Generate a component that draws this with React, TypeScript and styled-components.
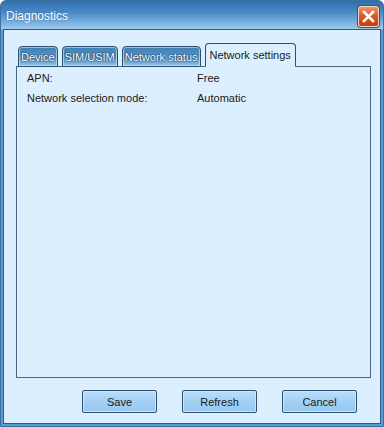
import { Fragment } from "react";
import styled, { createGlobalStyle } from "styled-components";

const GlobalStyle = createGlobalStyle`
  html, body {
    margin: 0;
    padding: 0;
    background: #ffffff;
  }
  body {
    font-family: "Liberation Sans", Arial, sans-serif;
    font-size: 11px;
  }
`;

const Window = styled.div`
  width: 384px;
  height: 427px;
  box-sizing: border-box;
  display: flex;
  flex-direction: column;
  border-radius: 6px 6px 0 0;
  background: linear-gradient(to bottom, #2f6fae 0px, #4b8cc8 12px, #9ccaee 28px, #5a9ad6 29px, #5a9ad6 100%);
  border: 1px solid #3a6f9f;
  overflow: hidden;
`;

const TitleBar = styled.div`
  height: 28px;
  flex: none;
  display: flex;
  align-items: center;
  justify-content: space-between;
  padding: 0 4px 0 5px;
  box-sizing: border-box;
`;

const Title = styled.span`
  color: #ffffff;
  font-size: 12px;
  text-shadow: 0 0 2px rgba(20, 60, 110, 0.5);
  margin-top: 1px;
`;

const CloseButton = styled.div`
  width: 21px;
  height: 21px;
  box-sizing: border-box;
  margin-top: 2px;
  border: 1px solid #f3d7c8;
  border-radius: 3px;
  background: linear-gradient(to bottom, #ef9a6a 0%, #dc5a2c 45%, #c23a14 100%);
  box-shadow: 0 0 0 1px #8a3a1e;
  display: flex;
  align-items: center;
  justify-content: center;
`;

const Body = styled.div`
  flex: 1;
  margin: 0 2px 2px 2px;
  background: #dcefff;
  border: 1px solid #2c5b88;
  display: flex;
  flex-direction: column;
  padding: 13px 9px 10px 12px;
`;

const TabStrip = styled.div`
  display: flex;
  align-items: flex-end;
  gap: 4px;
  padding-left: 2px;
  position: relative;
  z-index: 1;
  margin-bottom: -1px;
`;

const Tab = styled.div<{ $active?: boolean }>`
  box-sizing: border-box;
  height: ${(p) => (p.$active ? "24px" : "21px")};
  padding: 0 ${(p) => (p.$active ? "4px" : "2px")};
  display: flex;
  align-items: center;
  border: 1px solid #2e4f70;
  border-bottom: ${(p) => (p.$active ? "1px solid #dcefff" : "1px solid #2e4f70")};
  border-radius: 4px 4px 0 0;
  font-size: 11px;
  color: ${(p) => (p.$active ? "#1a1a1a" : "#ffffff")};
  background: ${(p) =>
    p.$active
      ? "#dcefff"
      : "linear-gradient(to bottom, #3f7fb2 0%, #5596c8 50%, #88bfe6 100%)"};
  box-shadow: ${(p) => (p.$active ? "none" : "inset 0 0 0 1px rgba(225, 242, 255, 0.55)")};
  text-shadow: ${(p) =>
    p.$active ? "none" : "0 0 2px #183a5c, 0 0 1px #183a5c, 0 0 1px #183a5c"};
`;

const Panel = styled.div`
  flex: 1;
  border: 1px solid #4a6782;
  background: #dcefff;
  padding: 1px 10px;
  display: grid;
  grid-template-columns: 170px 1fr;
  grid-auto-rows: 20px;
  align-content: start;
`;

const Cell = styled.div`
  display: flex;
  align-items: center;
  color: #1a1a1a;
  font-size: 11px;
`;

const ButtonRow = styled.div`
  display: flex;
  justify-content: flex-end;
  gap: 25px;
  padding: 12px 14px 0 0;
`;

const Button = styled.button`
  width: 75px;
  height: 23px;
  box-sizing: border-box;
  border: 1px solid #2f4f6e;
  border-radius: 2px;
  background: linear-gradient(to bottom, #b9defa 0%, #a3d0f4 50%, #97c8f0 100%);
  box-shadow: inset 0 0 0 1px #cbe6fb;
  font-family: "Liberation Sans", Arial, sans-serif;
  font-size: 11px;
  color: #1a1a1a;
  padding: 0;
`;

const settings = [
  { label: "APN:", value: "Free" },
  { label: "Network selection mode:", value: "Automatic" },
];

const tabs = ["Device", "SIM/USIM", "Network status", "Network settings"];

const App = () => {
  return (
    <>
      <GlobalStyle />
      <Window>
        <TitleBar>
          <Title>Diagnostics</Title>
          <CloseButton>
            <svg width="13" height="13" viewBox="0 0 13 13">
              <path d="M2 2 L11 11 M11 2 L2 11" stroke="#ffffff" strokeWidth="2.6" strokeLinecap="square" />
            </svg>
          </CloseButton>
        </TitleBar>
        <Body>
          <TabStrip>
            {tabs.map((t) => (
              <Tab key={t} $active={t === "Network settings"}>
                {t}
              </Tab>
            ))}
          </TabStrip>
          <Panel>
            {settings.map((s) => (
              <Fragment key={s.label}>
                <Cell>{s.label}</Cell>
                <Cell>{s.value}</Cell>
              </Fragment>
            ))}
          </Panel>
          <ButtonRow>
            <Button>Save</Button>
            <Button>Refresh</Button>
            <Button>Cancel</Button>
          </ButtonRow>
        </Body>
      </Window>
    </>
  );
};

export default App;
